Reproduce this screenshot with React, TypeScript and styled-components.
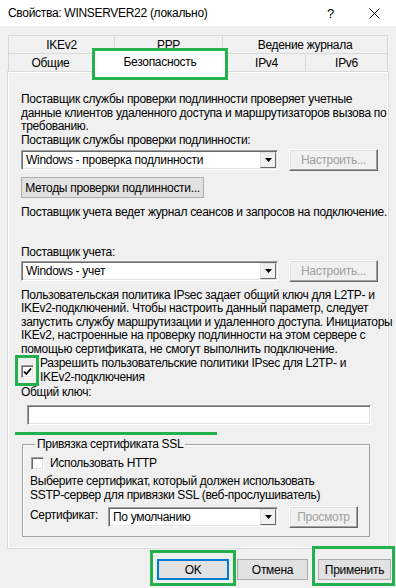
import styled, { createGlobalStyle } from 'styled-components';

const GlobalStyle = createGlobalStyle`
  html, body {
    margin: 0;
    padding: 0;
    background: #f0f0f0;
  }
  body {
    font-family: 'Liberation Sans', Arial, sans-serif;
    font-size: 12px;
    letter-spacing: -0.3px;
    color: #000;
  }
  * {
    box-sizing: border-box;
  }
`;

const GREEN = '#22b14c';

const Window = styled.div`
  width: 396px;
  height: 588px;
  background: #f0f0f0;
  overflow: hidden;
  display: flex;
  flex-direction: column;
`;

const TitleBar = styled.div`
  height: 26px;
  flex-shrink: 0;
  background: #fff;
  display: flex;
  align-items: center;
  padding-left: 8px;
`;

const Title = styled.div`
  flex: 1;
  white-space: nowrap;
`;

const CaptionButton = styled.div<{ $w: number }>`
  width: ${(p) => p.$w}px;
  height: 26px;
  display: flex;
  align-items: center;
  justify-content: center;
  font-size: 13px;
`;

const TabStrip = styled.div`
  margin: 9px 0 0 8px;
  width: 380px;
  display: flex;
  flex-direction: column;
  position: relative;
  z-index: 1;
`;

const TabRow = styled.div`
  display: flex;
  height: 18px;
`;

const Tab = styled.div<{ $w: number }>`
  width: ${(p) => p.$w}px;
  height: 18px;
  margin-left: -1px;
  border: 1px solid #d9d9d9;
  border-bottom: none;
  background: #f0f0f0;
  display: flex;
  align-items: center;
  justify-content: center;
  white-space: nowrap;
  &:first-child {
    margin-left: 0;
  }
`;

const ActiveTab = styled.div<{ $w: number }>`
  width: ${(p) => p.$w}px;
  height: 32px;
  margin: -5px 0 -9px -1px;
  border: 3px solid ${GREEN};
  background: #fff;
  display: flex;
  align-items: center;
  justify-content: center;
  padding-bottom: 4px;
  position: relative;
  z-index: 2;
`;

const Panel = styled.div`
  margin-left: 7px;
  width: 382px;
  border: 1px solid #d9d9d9;
  box-shadow: inset 1px 1px 0 #fff, inset -1px -1px 0 #fff;
  padding: 21px 10px 11px 13px;
  display: flex;
  flex-direction: column;
`;

const Text = styled.div<{ $mt?: number }>`
  line-height: 13.5px;
  margin-top: ${(p) => p.$mt ?? 0}px;
  white-space: nowrap;
`;

const Line = styled.span`
  display: block;
`;

const ControlRow = styled.div<{ $mt?: number }>`
  display: flex;
  align-items: center;
  height: 22px;
  margin-top: ${(p) => p.$mt ?? 0}px;
`;

const FieldLabel = styled.span`
  width: 78px;
  margin-bottom: 5px;
  white-space: nowrap;
`;

const Combo = styled.div<{ $w: number }>`
  width: ${(p) => p.$w}px;
  height: 20px;
  display: flex;
  align-items: center;
  background: #fff;
  border: 1px solid;
  border-color: #a0a0a0 #fff #fff #a0a0a0;
  box-shadow: inset 1px 1px 0 #696969, inset -1px -1px 0 #e3e3e3;
`;

const ComboText = styled.span`
  flex: 1;
  padding-left: 4px;
  white-space: nowrap;
`;

const DropButton = styled.span`
  width: 16px;
  height: 16px;
  margin-right: 1px;
  background: #f0f0f0;
  border: 1px solid;
  border-color: #e3e3e3 #696969 #696969 #e3e3e3;
  display: flex;
  align-items: center;
  justify-content: center;
`;

const DisabledButton = styled.div<{ $w: number; $ml: number }>`
  width: ${(p) => p.$w}px;
  height: 22px;
  margin-left: ${(p) => p.$ml}px;
  background: #f0f0f0;
  color: #a0a0a0;
  border: 1px solid;
  border-color: #fff #696969 #696969 #fff;
  box-shadow: inset -1px -1px 0 #a0a0a0, inset 1px 1px 0 #e3e3e3;
  display: flex;
  align-items: center;
  justify-content: center;
  white-space: nowrap;
`;

const Button = styled.div<{ $w: number; $primary?: boolean }>`
  width: ${(p) => p.$w}px;
  height: 21px;
  background: #e1e1e1;
  border: 1px solid ${(p) => (p.$primary ? '#0078d7' : '#adadad')};
  box-shadow: ${(p) => (p.$primary ? 'inset 0 0 0 1px #0078d7' : 'none')};
  display: flex;
  align-items: center;
  justify-content: center;
  white-space: nowrap;
`;

const MethodsButton = styled(Button)`
  margin-top: 6px;
`;

const CheckRow = styled.div<{ $mt?: number }>`
  display: flex;
  align-items: center;
  margin-top: ${(p) => p.$mt ?? 0}px;
`;

const CheckBox = styled.span<{ $ml?: number }>`
  width: 13px;
  height: 13px;
  flex-shrink: 0;
  margin-left: ${(p) => p.$ml ?? 0}px;
  background: #fff;
  border: 1px solid;
  border-color: #a0a0a0 #fff #fff #a0a0a0;
  box-shadow: inset 1px 1px 0 #696969, inset -1px -1px 0 #e3e3e3;
  display: flex;
  align-items: center;
  justify-content: center;
`;

const CheckHighlight = styled.span`
  width: 24px;
  height: 31px;
  margin: -2px 1px -2px -6px;
  border: 3px solid ${GREEN};
  padding: 2px 0 0 3px;
  display: flex;
  align-items: center;
`;

const CheckLabel = styled.span<{ $ml: number }>`
  margin-left: ${(p) => p.$ml}px;
  line-height: 13.5px;
  white-space: nowrap;
`;

const KeyInput = styled.div`
  width: 344px;
  height: 20px;
  margin: 5.5px 0 0 6px;
  background: #fff;
  border: 1px solid;
  border-color: #a0a0a0 #fff #fff #a0a0a0;
  box-shadow: inset 1px 1px 0 #696969, inset -1px -1px 0 #e3e3e3;
`;

const GreenRule = styled.div`
  width: 202px;
  height: 3px;
  margin: 7px 0 0 -6px;
  background: ${GREEN};
`;

const Group = styled.fieldset`
  margin: 3px 0 0 1px;
  width: 348px;
  border: 1px solid #a0a0a0;
  box-shadow: inset 1px 1px 0 #fff;
  padding: 0 7px 8px 7px;
  display: flex;
  flex-direction: column;
`;

const GroupTitle = styled.legend`
  padding: 0 2px;
  margin-left: 5px;
  line-height: 13.5px;
`;

const Footer = styled.div`
  display: flex;
  justify-content: flex-end;
  align-items: flex-start;
  padding-right: 1px;
`;

const Highlight = styled.div<{ $pad: string; $mt: number; $ml: number }>`
  border: 3px solid ${GREEN};
  padding: ${(p) => p.$pad};
  margin-top: ${(p) => p.$mt}px;
  margin-left: ${(p) => p.$ml}px;
  position: relative;
  z-index: 1;
`;

const CancelButton = styled(Button)`
  margin: 10px 0 0 1px;
`;

const Arrow = () => (
  <svg width="7" height="4" viewBox="0 0 7 4">
    <polygon points="0,0 7,0 3.5,4" fill="#000" />
  </svg>
);

const Check = () => (
  <svg width="9" height="9" viewBox="0 0 9 9">
    <path d="M1 4.5 L3.3 7 L8 1.5" fill="none" stroke="#000" strokeWidth="1.8" />
  </svg>
);

const CloseIcon = () => (
  <svg width="11" height="11" viewBox="0 0 11 11">
    <path d="M0.5 0.5 L10.5 10.5 M10.5 0.5 L0.5 10.5" stroke="#000" strokeWidth="1" />
  </svg>
);

const App = () => {
  return (
    <>
      <GlobalStyle />
      <Window>
        <TitleBar>
          <Title>Свойства: WINSERVER22 (локально)</Title>
          <CaptionButton $w={45}>?</CaptionButton>
          <CaptionButton $w={43}>
            <CloseIcon />
          </CaptionButton>
        </TitleBar>

        <TabStrip>
          <TabRow>
            <Tab $w={107}>IKEv2</Tab>
            <Tab $w={109}>PPP</Tab>
            <Tab $w={166}>Ведение журнала</Tab>
          </TabRow>
          <TabRow>
            <Tab $w={85}>Общие</Tab>
            <ActiveTab $w={136}>Безопасность</ActiveTab>
            <Tab $w={79}>IPv4</Tab>
            <Tab $w={83}>IPv6</Tab>
          </TabRow>
        </TabStrip>

        <Panel>
          <Text>
            <Line>Поставщик службы проверки подлинности проверяет учетные</Line>
            <Line>данные клиентов удаленного доступа и маршрутизаторов вызова по</Line>
            <Line>требованию.</Line>
          </Text>
          <Text>Поставщик службы проверки подлинности:</Text>
          <ControlRow $mt={2}>
            <Combo $w={257}>
              <ComboText>Windows - проверка подлинности</ComboText>
              <DropButton>
                <Arrow />
              </DropButton>
            </Combo>
            <DisabledButton $w={89} $ml={11}>Настроить...</DisabledButton>
          </ControlRow>
          <MethodsButton $w={183}>Методы проверки подлинности...</MethodsButton>
          <Text $mt={7.5}>Поставщик учета ведет журнал сеансов и запросов на подключение.</Text>

          <Text $mt={26.5}>Поставщик учета:</Text>
          <ControlRow $mt={1}>
            <Combo $w={257}>
              <ComboText>Windows - учет</ComboText>
              <DropButton>
                <Arrow />
              </DropButton>
            </Combo>
            <DisabledButton $w={89} $ml={11}>Настроить...</DisabledButton>
          </ControlRow>
          <Text $mt={6.5}>
            <Line>Пользовательская политика IPsec задает общий ключ для L2TP- и</Line>
            <Line>IKEv2-подключений. Чтобы настроить данный параметр, следует</Line>
            <Line>запустить службу маршрутизации и удаленного доступа. Инициаторы</Line>
            <Line>IKEv2, настроенные на проверку подлинности на этом сервере с</Line>
            <Line>помощью сертификата, не смогут выполнить подключение.</Line>
          </Text>
          <CheckRow $mt={1}>
            <CheckHighlight>
              <CheckBox>
                <Check />
              </CheckBox>
            </CheckHighlight>
            <CheckLabel $ml={0}>
              <Line>Разрешить пользовательские политики IPsec для L2TP- и</Line>
              <Line>IKEv2-подключения</Line>
            </CheckLabel>
          </CheckRow>
          <Text $mt={1.5}>Общий ключ:</Text>
          <KeyInput />
          <GreenRule />

          <Group>
            <GroupTitle>Привязка сертификата SSL</GroupTitle>
            <CheckRow $mt={5.5}>
              <CheckBox $ml={1} />
              <CheckLabel $ml={6}>Использовать HTTP</CheckLabel>
            </CheckRow>
            <Text $mt={5}>
              <Line>Выберите сертификат, который должен использовать</Line>
              <Line>SSTP-сервер для привязки SSL (веб-прослушиватель)</Line>
            </Text>
            <ControlRow $mt={4}>
              <FieldLabel>Сертификат:</FieldLabel>
              <Combo $w={170}>
                <ComboText>По умолчанию</ComboText>
                <DropButton>
                  <Arrow />
                </DropButton>
              </Combo>
              <DisabledButton $w={69} $ml={11}>Просмотр</DisabledButton>
            </ControlRow>
          </Group>
        </Panel>

        <Footer>
          <Highlight $pad="6px 4px 3px 4px" $mt={1} $ml={0}>
            <Button $w={72} $primary>OK</Button>
          </Highlight>
          <CancelButton $w={71}>Отмена</CancelButton>
          <Highlight $pad="10px 1px 3px 3px" $mt={-3} $ml={4}>
            <Button $w={73}>Применить</Button>
          </Highlight>
        </Footer>
      </Window>
    </>
  );
};

export default App;
